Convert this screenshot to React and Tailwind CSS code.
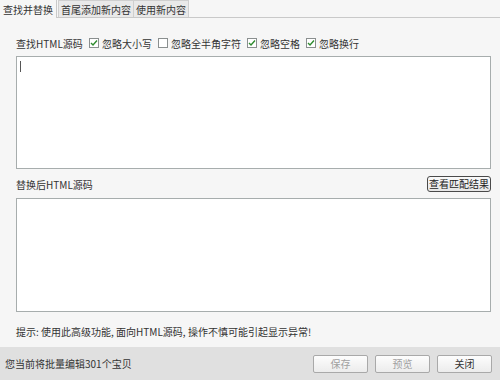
import React from 'react';

const font = { fontFamily: '"Noto Sans CJK SC", "Liberation Sans", sans-serif' };

const Check = ({ checked, label }) => (
  <label className="flex items-center gap-[3px]">
    <span className="w-[10px] h-[10px] border border-[#8a8f8f] bg-white flex items-center justify-center">
      {checked && (
        <svg width="8" height="8" viewBox="0 0 8 8">
          <path d="M1 4 L3 6 L7 1.5" fill="none" stroke="#2e8b2e" strokeWidth="1.4" />
        </svg>
      )}
    </span>
    <span>{label}</span>
  </label>
);

const FootButton = ({ children, dim }) => (
  <button
    className={`w-[55px] h-[18px] border border-[#a9a9a9] rounded-[2px] bg-gradient-to-b from-[#fdfdfd] to-[#ececec] leading-none ${dim ? 'text-[#a0a0a0]' : 'text-[#333]'}`}
  >
    {children}
  </button>
);

export default function App() {
  return (
    <div className="w-[500px] h-[380px] flex flex-col bg-[#f6f6f6] text-[10px] text-[#333]" style={font}>
      {/* tabs */}
      <div className="flex h-[18px] border-b border-[#c9c9c9] items-end">
        <div className="h-[18px] px-[3px] flex items-center bg-[#f6f6f6] border-r border-[#c9c9c9] -mb-px">查找并替换</div>
        <div className="h-[17px] px-[2px] ml-[1px] flex items-center bg-[#e9e9e9] border border-b-0 border-[#cfcfcf]">首尾添加新内容</div>
        <div className="h-[17px] px-[2px] flex items-center bg-[#e9e9e9] border border-b-0 border-l-0 border-[#cfcfcf]">使用新内容</div>
      </div>

      <div className="flex-1 flex flex-col px-[16px]">
        <div className="flex items-center h-[16px] mt-[17px]">
          <span className="w-[73px]">查找HTML源码</span>
          <div className="flex items-center gap-[6px]">
            <Check checked label="忽略大小写" />
            <Check label="忽略全半角字符" />
            <Check checked label="忽略空格" />
            <Check checked label="忽略换行" />
          </div>
        </div>
        <div className="mt-[5px] h-[113px] w-[475px] border border-[#a7adad] bg-white relative">
          <span className="absolute left-[3px] top-[4px] w-px h-[11px] bg-[#555]" />
        </div>

        <div className="flex items-center justify-between mt-[7px] h-[16px] w-[475px]">
          <span>替换后HTML源码</span>
          <button className="h-[16px] px-[1px] border border-[#4a4a4a] rounded-[3px] bg-gradient-to-b from-[#fafafa] to-[#e6e6e6] leading-none text-[#222]">
            查看匹配结果
          </button>
        </div>
        <div className="mt-[6px] h-[114px] w-[475px] border border-[#a7adad] bg-white" />

        <div className="mt-[12px]">提示: 使用此高级功能, 面向HTML源码, 操作不慎可能引起显示异常!</div>
      </div>

      <div className="h-[33px] bg-[#e0e0e0] flex items-center justify-between pl-[5px] pr-[8px]">
        <span>您当前将批量编辑301个宝贝</span>
        <div className="flex gap-[7px]">
          <FootButton dim>保存</FootButton>
          <FootButton dim>预览</FootButton>
          <FootButton>关闭</FootButton>
        </div>
      </div>
    </div>
  );
}
